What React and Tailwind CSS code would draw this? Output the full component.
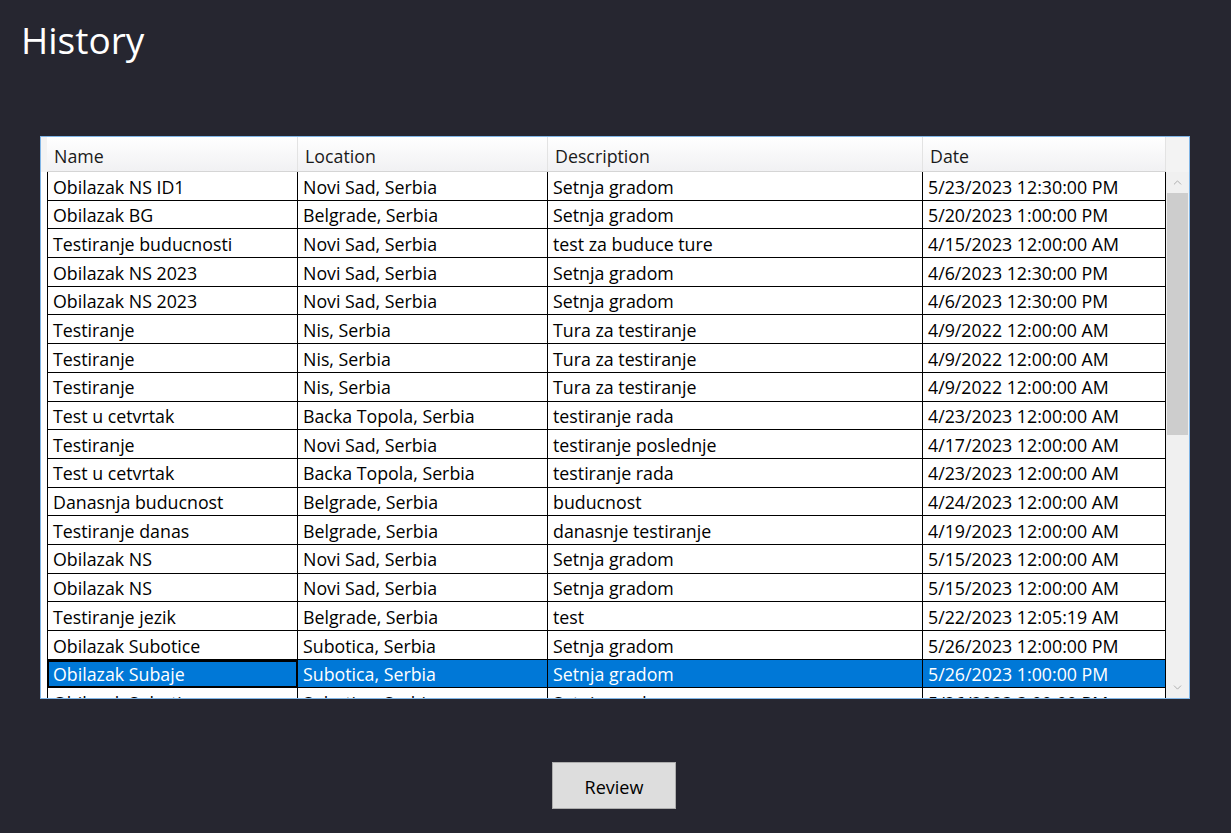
import { ChevronUp, ChevronDown } from "lucide-react";

const rows = [
  ["Obilazak NS ID1", "Novi Sad, Serbia", "Setnja gradom", "5/23/2023 12:30:00 PM"],
  ["Obilazak BG", "Belgrade, Serbia", "Setnja gradom", "5/20/2023 1:00:00 PM"],
  ["Testiranje buducnosti", "Novi Sad, Serbia", "test za buduce ture", "4/15/2023 12:00:00 AM"],
  ["Obilazak NS 2023", "Novi Sad, Serbia", "Setnja gradom", "4/6/2023 12:30:00 PM"],
  ["Obilazak NS 2023", "Novi Sad, Serbia", "Setnja gradom", "4/6/2023 12:30:00 PM"],
  ["Testiranje", "Nis, Serbia", "Tura za testiranje", "4/9/2022 12:00:00 AM"],
  ["Testiranje", "Nis, Serbia", "Tura za testiranje", "4/9/2022 12:00:00 AM"],
  ["Testiranje", "Nis, Serbia", "Tura za testiranje", "4/9/2022 12:00:00 AM"],
  ["Test u cetvrtak", "Backa Topola, Serbia", "testiranje rada", "4/23/2023 12:00:00 AM"],
  ["Testiranje", "Novi Sad, Serbia", "testiranje poslednje", "4/17/2023 12:00:00 AM"],
  ["Test u cetvrtak", "Backa Topola, Serbia", "testiranje rada", "4/23/2023 12:00:00 AM"],
  ["Danasnja buducnost", "Belgrade, Serbia", "buducnost", "4/24/2023 12:00:00 AM"],
  ["Testiranje danas", "Belgrade, Serbia", "danasnje testiranje", "4/19/2023 12:00:00 AM"],
  ["Obilazak NS", "Novi Sad, Serbia", "Setnja gradom", "5/15/2023 12:00:00 AM"],
  ["Obilazak NS", "Novi Sad, Serbia", "Setnja gradom", "5/15/2023 12:00:00 AM"],
  ["Testiranje jezik", "Belgrade, Serbia", "test", "5/22/2023 12:05:19 AM"],
  ["Obilazak Subotice", "Subotica, Serbia", "Setnja gradom", "5/26/2023 12:00:00 PM"],
  ["Obilazak Subaje", "Subotica, Serbia", "Setnja gradom", "5/26/2023 1:00:00 PM"],
  ["Obilazak Subotica", "Subotica, Serbia", "Setnja gradom", "5/26/2023 3:00:00 PM"],
];

const widths = ["w-[251px]", "w-[250px]", "w-[375px]", "w-[243px]"];
const headers = ["Name", "Location", "Description", "Date"];
const selectedIndex = 17;

function Row({ cells, selected }) {
  return (
    <div className="flex h-[28.7px] shrink-0">
      {cells.map((text, i) => (
        <div
          key={i}
          className={`${widths[i]} shrink-0 flex items-center pl-[5px] pt-[2px] border-b border-r border-black whitespace-nowrap overflow-hidden ${
            i === 0 ? "border-l" : ""
          } ${
            selected
              ? i === 0
                ? "bg-[#0078d7] text-white outline-2 -outline-offset-2 outline-black"
                : "bg-[#0078d7] text-white"
              : "bg-white text-black"
          }`}
        >
          {text}
        </div>
      ))}
    </div>
  );
}

export default function App() {
  return (
    <div
      className="w-[1231px] h-[833px] bg-[#262630] flex flex-col"
      style={{ fontFamily: '"Open Sans", "Noto Sans", sans-serif' }}
    >
      <h1 className="pl-[21px] pt-[15px] h-[136px] text-[37px] leading-[50px] text-white">
        History
      </h1>

      <div className="ml-[40px] w-[1150px] h-[563px] border border-[#80b5e6] bg-white flex overflow-hidden text-[17.8px]">
        <div className="w-[6px] shrink-0 flex flex-col">
          <div className="h-[35px] bg-[#f3f3f3]" />
          <div className="flex-1 bg-white" />
        </div>

        <div className="w-[1119px] shrink-0 flex flex-col overflow-hidden">
          <div className="flex h-[35px] shrink-0 bg-gradient-to-b from-white to-[#f1f1f3] border-b border-[#d5d5d5]">
            {headers.map((h, i) => (
              <div
                key={h}
                className={`${widths[i]} shrink-0 flex items-center pl-[7px] pt-[4px] border-r border-[#e3e3e3] text-[#1a1a1a]`}
              >
                {h}
              </div>
            ))}
          </div>
          {rows.map((r, i) => (
            <Row key={i} cells={r} selected={i === selectedIndex} />
          ))}
        </div>

        <div className="w-[23px] shrink-0 flex flex-col bg-[#f0f0f0]">
          <div className="h-[35px] bg-[#f3f3f3]" />
          <div className="h-[21px] flex items-center justify-center text-[#a0a0a0]">
            <ChevronUp size={13} strokeWidth={1.5} />
          </div>
          <div className="mx-[1px] h-[242px] bg-[#cdcdcd]" />
          <div className="flex-1" />
          <div className="h-[21px] flex items-center justify-center text-[#a0a0a0]">
            <ChevronDown size={13} strokeWidth={1.5} />
          </div>
        </div>
      </div>

      <div className="flex justify-center mt-[63px] pr-[3px]">
        <button className="w-[124px] h-[47px] pt-[3px] bg-[#dddddd] border border-[#adadad] text-[18px] text-black">
          Review
        </button>
      </div>
    </div>
  );
}
